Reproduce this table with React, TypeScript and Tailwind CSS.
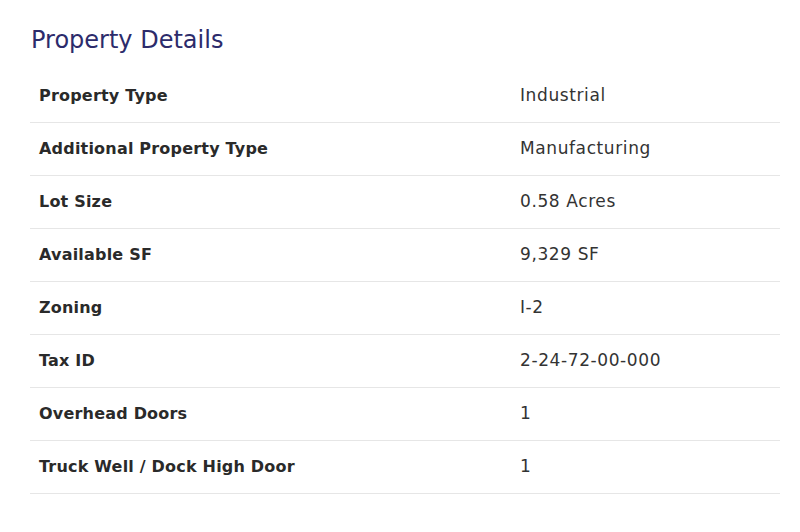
import React from 'react';

const rows: [string, string][] = [
  ['Property Type', 'Industrial'],
  ['Additional Property Type', 'Manufacturing'],
  ['Lot Size', '0.58 Acres'],
  ['Available SF', '9,329 SF'],
  ['Zoning', 'I-2'],
  ['Tax ID', '2-24-72-00-000'],
  ['Overhead Doors', '1'],
  ['Truck Well / Dock High Door', '1'],
];

export default function App() {
  return (
    <div className="w-[800px] h-[532px] bg-white pt-[24px] pl-[30px] pr-[20px] font-['DejaVu_Sans',sans-serif]">
      <h2 className="text-[24px] leading-[32px] font-normal text-[#2c2b6b] pl-px">Property Details</h2>
      <div className="mt-[14px]">
        {rows.map(([label, value]) => (
          <div key={label} className="flex items-center h-[53px] border-b border-[#e6e6e6] text-[#2a2a2a]">
            <div className="w-[490px] pl-[9px] text-[16px] font-semibold tracking-[0.2px]">{label}</div>
            <div className="flex-1 text-[17px] tracking-[0.6px] text-[#333]">{value}</div>
          </div>
        ))}
      </div>
    </div>
  );
}
